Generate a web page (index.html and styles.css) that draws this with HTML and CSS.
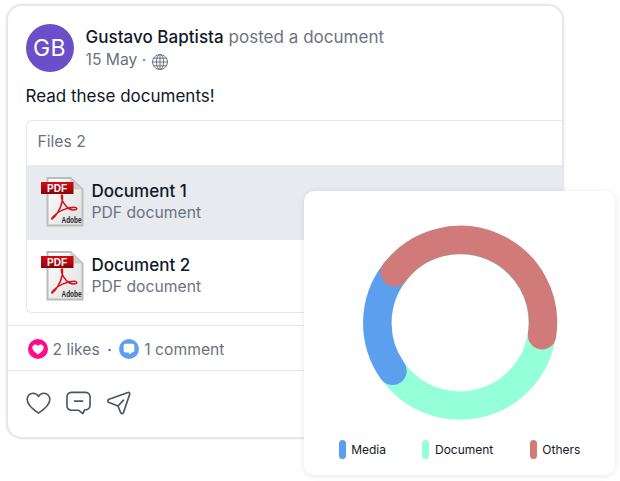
FILE: index.html
```html
<!DOCTYPE html>
<html lang="en">
<head>
<meta charset="utf-8">
<title>Post</title>
<link rel="stylesheet" href="styles.css">
</head>
<body>
<svg class="defs" width="0" height="0" aria-hidden="true">
  <defs>
    <linearGradient id="paper" x1="0" y1="0" x2="1" y2="1">
      <stop offset="0" stop-color="#ffffff"/>
      <stop offset="1" stop-color="#dedede"/>
    </linearGradient>
    <linearGradient id="banner" x1="0" y1="0" x2="0" y2="1">
      <stop offset="0" stop-color="#d80b14"/>
      <stop offset="1" stop-color="#8a0307"/>
    </linearGradient>
    <symbol id="pdf" viewBox="0 0 44 50">
      <path d="M7.500 1H30.500L42.500 12.500V48.500H7.500Z" fill="url(#paper)" stroke="#bcbcbc" stroke-width="2"/>
      <path d="M30.500 1V12.500H42.500Z" fill="#cfcfcf"/>
      <rect x="1" y="5" width="32.500" height="12" fill="url(#banner)"/>
      <text x="17" y="14.700" class="pdf-label">PDF</text>
      <path d="M12 42C16 39.500 20.500 32 22 25C23 20 22.500 16.500 21.500 18.500C20.500 22 25.500 30 29.500 32C33 33.500 38 33 36.500 31C34.500 29 24 31.500 18 35.500C14 38.500 11 41.500 12 42Z" fill="none" stroke="#d3141c" stroke-width="1.500"/>
      <text x="41.500" y="46" class="adobe-label" textLength="20" lengthAdjust="spacingAndGlyphs">Adobe</text>
    </symbol>
  </defs>
</svg>

<main class="post">
  <header class="post-head">
    <div class="avatar">GB</div>
    <div class="meta">
      <p class="headline"><span class="author">Gustavo Baptista</span> posted a document</p>
      <p class="date">15 May ·
        <svg class="globe" viewBox="0 0 18 18" fill="none" stroke="#6b7280" stroke-width="1">
          <circle cx="9" cy="9" r="7.500"/>
          <ellipse cx="9" cy="9" rx="3.500" ry="7.500"/>
          <path d="M9 1.500V16.500M1.500 9H16.500M2.500 5.200H15.500M2.500 12.800H15.500"/>
        </svg>
      </p>
    </div>
  </header>

  <p class="message">Read these documents!</p>

  <section class="files">
    <h2 class="files-title">Files 2</h2>
    <div class="file file-active">
      <svg class="pdf-icon"><use href="#pdf"/></svg>
      <div class="file-text">
        <p class="file-name">Document 1</p>
        <p class="file-type">PDF document</p>
      </div>
    </div>
    <div class="file">
      <svg class="pdf-icon"><use href="#pdf"/></svg>
      <div class="file-text">
        <p class="file-name">Document 2</p>
        <p class="file-type">PDF document</p>
      </div>
    </div>
  </section>

  <div class="stats">
    <svg class="badge" viewBox="0 0 20 20">
      <circle cx="10" cy="10" r="10" fill="#ff0a8a"/>
      <path d="M10 15.500C6 12.800 4.300 10.800 4.300 8.500C4.300 6.700 5.700 5.400 7.300 5.400C8.400 5.400 9.400 6 10 7C10.600 6 11.600 5.400 12.700 5.400C14.300 5.400 15.700 6.700 15.700 8.500C15.700 10.800 14 12.800 10 15.500Z" fill="#fff"/>
    </svg>
    <span>2 likes</span>
    <span class="dot">·</span>
    <svg class="badge" viewBox="0 0 20 20">
      <circle cx="10" cy="10" r="10" fill="#5b9fee"/>
      <path d="M6.800 4.800H13.200A2.200 2.200 0 0 1 15.400 7V11.200A2.200 2.200 0 0 1 13.200 13.400H12.600L10.600 15.500L9.800 13.400H6.800A2.200 2.200 0 0 1 4.600 11.200V7A2.200 2.200 0 0 1 6.800 4.800Z" fill="#fff"/>
    </svg>
    <span>1 comment</span>
  </div>

  <div class="actions">
    <svg class="action" viewBox="0 0 26 24" fill="none" stroke="#4b5563" stroke-width="1.700" stroke-linejoin="round">
      <path d="M13 22.500C6 17.800 1.200 13.800 1.200 8.300C1.200 4.500 4 1.800 7.300 1.800C9.700 1.800 11.800 3 13 5.200C14.200 3 16.300 1.800 18.700 1.800C22 1.800 24.800 4.500 24.800 8.300C24.800 13.800 20 17.800 13 22.500Z"/>
    </svg>
    <svg class="action" viewBox="0 0 26 24" fill="none" stroke="#4b5563" stroke-width="1.700" stroke-linejoin="round" stroke-linecap="round">
      <path d="M5.500 1H20.500A4.500 4.500 0 0 1 25 5.500V14.500A4.500 4.500 0 0 1 20.500 19H19.500L17.500 23L13 19.500H5.500A4.500 4.500 0 0 1 1 15V5.500A4.500 4.500 0 0 1 5.500 1Z"/>
      <path d="M8.800 10H17.200"/>
    </svg>
    <svg class="action" viewBox="0 0 24 24" fill="none" stroke="#4b5563" stroke-width="1.700" stroke-linejoin="round">
      <path d="M21.500 1.500C22.800 1.200 23.500 2 23.200 3.200L17 21.500C16.500 23 14.800 23 14.200 21.700L11.500 15L2.500 11.500C0.800 10.800 0.800 9 2.500 8.200Z"/>
      <path d="M11.500 15L17 9.200" stroke-linecap="round"/>
    </svg>
  </div>
</main>

<aside class="chart-card">
  <svg class="donut" viewBox="0 0 200 200" fill="none" stroke-width="28.400" stroke-linecap="round">
    <circle cx="100" cy="100" r="82.600" stroke="#94ffd8"/>
    <path d="M34.700 49.400A82.600 82.600 0 0 0 32.500 147.800" stroke="#5b9fee"/>
    <path d="M34.700 49.400A82.600 82.600 0 0 1 182 112.200" stroke="#d17a7a"/>
  </svg>
  <ul class="legend">
    <li class="legend-item"><i class="swatch swatch-media"></i>Media</li>
    <li class="legend-item"><i class="swatch swatch-document"></i>Document</li>
    <li class="legend-item"><i class="swatch swatch-others"></i>Others</li>
  </ul>
</aside>
</body>
</html>
```
FILE: styles.css
```css
* { box-sizing: border-box; }
html, body { margin: 0; padding: 0; }
body {
  width: 620px;
  height: 481px;
  padding: 4px 0 0 6px;
  background: #fff;
  font-family: Inter, "Liberation Sans", sans-serif;
  color: #111827;
  position: relative;
  overflow: hidden;
}
p, h2, ul { margin: 0; padding: 0; }
.defs { position: absolute; }

.post {
  width: 558px;
  height: 435px;
  border: 2.5px solid #e5e7eb;
  border-radius: 16px;
  background: #fff;
  overflow: hidden;
  box-shadow: 0 0 3px rgba(17, 24, 39, .08);
}
.post-head {
  display: flex;
  gap: 12px;
  padding: 17.500px 0 0 17.500px;
}
.avatar {
  width: 48px;
  height: 48px;
  border-radius: 50%;
  background: #6b4fc8;
  color: #fff;
  font-size: 23px;
  letter-spacing: .5px;
  display: flex;
  align-items: center;
  justify-content: center;
}
.meta { padding-top: 2px; }
.headline {
  font-size: 17px;
  line-height: 22px;
  letter-spacing: .03px;
  color: #6b7280;
}
.author { font-weight: 500; color: #111827; }
.date {
  font-size: 15.700px;
  line-height: 20px;
  margin-top: 1px;
  color: #6b7280;
  display: flex;
  align-items: center;
  gap: 5px;
}
.globe { width: 18px; height: 18px; margin: 4px 0 0 0; }
.message {
  font-size: 17px;
  line-height: 22px;
  margin: 13px 0 0 17.500px;
  color: #111827;
}
.files {
  margin: 13px 0 0 17.500px;
  height: 193px;
  border: 1px solid #e5e7eb;
  border-right: 0;
  border-radius: 6px 0 0 6px;
  overflow: hidden;
}
.files-title {
  font-size: 15.700px;
  font-weight: 400;
  line-height: 42px;
  height: 44px;
  padding-left: 11px;
  color: #6b7280;
}
.file {
  display: flex;
  align-items: center;
  gap: 8px;
  height: 73px;
  padding-left: 13px;
}
.file-active { background: #e7eaef; height: 75px; }
.pdf-icon { width: 44px; height: 50px; flex: none; }
.pdf-label {
  font: 700 10px "Liberation Sans", sans-serif;
  fill: #fff;
  text-anchor: middle;
}
.adobe-label {
  font: 700 9px "Liberation Sans", sans-serif;
  fill: #222;
  text-anchor: end;
}
.file-text { padding-bottom: 1px; }
.file-name {
  font-size: 17px;
  line-height: 23px;
  font-weight: 500;
}
.file-type {
  font-size: 15.700px;
  line-height: 20px;
  color: #6b7280;
}
.stats {
  margin-top: 12px;
  height: 46px;
  border-top: 1px solid #e5e7eb;
  border-bottom: 1px solid #e5e7eb;
  display: flex;
  align-items: center;
  gap: 5px;
  padding: 3px 0 0 19.500px;
  font-size: 15.700px;
  color: #6b7280;
}
.badge { width: 20px; height: 20px; }
.dot { color: #4b5563; margin: 0 2.500px; }
.actions {
  display: flex;
  gap: 15px;
  padding: 20px 0 0 18px;
}
.action { width: 25px; height: 24px; }

.chart-card {
  position: absolute;
  left: 304px;
  top: 191px;
  width: 311px;
  height: 284px;
  background: #fff;
  border-radius: 10px;
  box-shadow: 0 1px 6px rgba(17, 24, 39, .10);
  padding-top: 32px;
}
.donut { display: block; width: 200px; height: 200px; margin: 0 auto; }
.legend {
  list-style: none;
  display: flex;
  justify-content: center;
  gap: 36.500px;
  margin-top: 17px;
}
.legend-item {
  display: flex;
  align-items: center;
  gap: 5.500px;
  font-size: 12px;
  line-height: 18px;
  color: #111827;
}
.swatch { width: 7px; height: 19px; border-radius: 3.500px; }
.swatch-media { background: #5b9fee; }
.swatch-document { background: #94ffd8; }
.swatch-others { background: #d17a7a; }
```
